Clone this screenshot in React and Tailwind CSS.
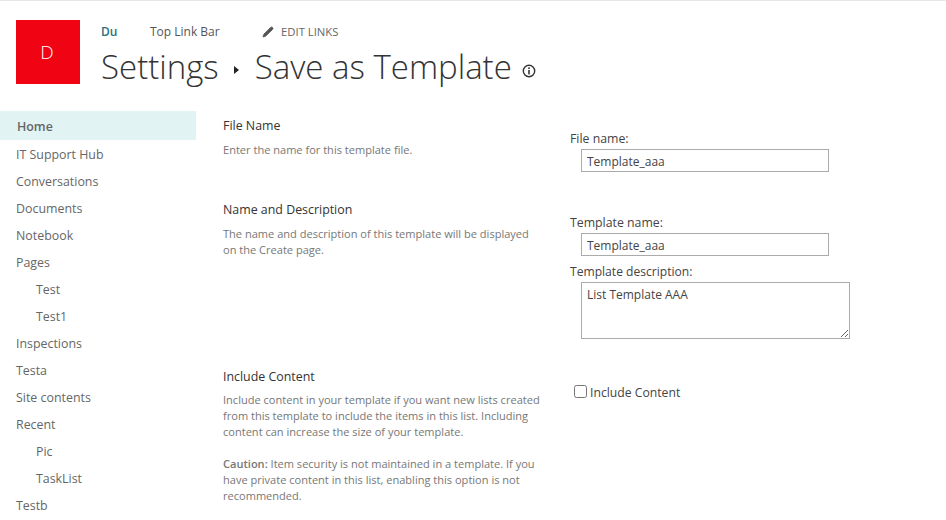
import React from 'react';
import { Pencil } from 'lucide-react';

const navItems = [
  { label: 'IT Support Hub' },
  { label: 'Conversations' },
  { label: 'Documents' },
  { label: 'Notebook' },
  { label: 'Pages' },
  { label: 'Test', sub: true },
  { label: 'Test1', sub: true },
  { label: 'Inspections' },
  { label: 'Testa' },
  { label: 'Site contents' },
  { label: 'Recent' },
  { label: 'Pic', sub: true },
  { label: 'TaskList', sub: true },
  { label: 'Testb' },
];

const Section = ({ title, className, children }) => (
  <div className={className}>
    <h3 className="text-[12.4px] leading-[17px] text-[#333333]">{title}</h3>
    <div className="mt-[8px] text-[11.05px] leading-[16px] text-[#777777]">{children}</div>
  </div>
);

const Field = ({ label, value }) => (
  <div>
    <label className="block text-[12.3px] leading-[17px] text-[#444444]">{label}</label>
    <input
      readOnly
      value={value}
      className="mt-[2px] ml-[11px] block h-[23px] w-[248px] border border-[#ababab] px-[5px] pt-[1px] text-[12px] text-[#444444] outline-none"
    />
  </div>
);

export default function App() {
  return (
    <div className="h-[520px] w-[946px] overflow-hidden border-t border-[#e6e6e6] bg-white font-['Open_Sans',sans-serif]">
      <header className="flex h-[110px] pt-[19px] pl-[16px]">
        <div className="flex h-[64px] w-[64px] items-center justify-center bg-[#f00313] pr-[2px] text-[19px] font-light text-white">
          D
        </div>
        <div className="ml-[21px]">
          <div className="flex h-[24px] items-center text-[12px] text-[#555555]">
            <span className="w-[49px] font-semibold text-[#2a6f80]">Du</span>
            <span className="w-[112px]">Top Link Bar</span>
            <Pencil size={12} fill="#555555" strokeWidth={1.5} className="text-[#555555]" />
            <span className="ml-[7px] text-[11.3px] text-[#666666]">EDIT LINKS</span>
          </div>
          <div className="flex items-center text-[33px] leading-[46px] font-light text-[#333333]">
            <span>Settings</span>
            <span className="mt-[5px] mr-[16px] ml-[15px] h-0 w-0 border-y-[4px] border-l-[5px] border-y-transparent border-l-[#222222]" />
            <span>Save as Template</span>
            <svg width="14" height="14" viewBox="0 0 14 14" className="mt-[7px] ml-[10px]" fill="none">
              <circle cx="7" cy="7" r="5.7" stroke="#333333" strokeWidth="1.4" />
              <rect x="6.2" y="6" width="1.6" height="4.4" fill="#333333" />
              <rect x="6.2" y="3.4" width="1.6" height="1.6" fill="#333333" />
            </svg>
          </div>
        </div>
      </header>

      <div className="flex">
        <nav className="w-[196px] shrink-0 text-[12.4px] text-[#666666]">
          <div className="flex h-[29px] items-center bg-[#e1f3f3] pt-[3px] pl-[17px] font-semibold">Home</div>
          {navItems.map((item) => (
            <div key={item.label} className={`flex h-[27px] items-center pt-[4px] ${item.sub ? 'pl-[36px]' : 'pl-[16px]'}`}>
              {item.label}
            </div>
          ))}
        </nav>

        <main className="flex flex-1">
          <div className="ml-[27px] w-[320px] shrink-0">
            <Section title="File Name" className="h-[84px] pt-[6px]">
              <p>Enter the name for this template file.</p>
            </Section>
            <Section title="Name and Description" className="h-[167px] pt-[6px]">
              <p>The name and description of this template will be displayed on the Create page.</p>
            </Section>
            <Section title="Include Content" className="pt-[6px]">
              <p className="-mt-[1px]">
                Include content in your template if you want new lists created from this template to include the items in this list. Including content can increase the size of your template.
              </p>
              <p className="mt-[16px]">
                <b className="font-semibold">Caution:</b> Item security is not maintained in a template. If you have private content in this list, enabling this option is not recommended.
              </p>
            </Section>
          </div>

          <div className="ml-[27px] flex-1">
            <div className="h-[84px] pt-[19px]">
              <Field label="File name:" value="Template_aaa" />
            </div>
            <div className="pt-[19px]">
              <Field label="Template name:" value="Template_aaa" />
              <label className="mt-[7px] block text-[12.1px] leading-[17px] text-[#444444]">Template description:</label>
              <textarea
                readOnly
                value="List Template AAA"
                className="mt-[2px] ml-[11px] block h-[57px] w-[269px] border border-[#ababab] px-[5px] pt-[3px] pb-[1px] text-[12px] text-[#444444] outline-none"
              />
            </div>
            <label className="mt-[41px] ml-[4px] flex items-center text-[12.2px] text-[#444444]">
              <input type="checkbox" className="h-[13px] w-[13px]" />
              <span className="mt-[4px] ml-[3px]">Include Content</span>
            </label>
          </div>
        </main>
      </div>
    </div>
  );
}
